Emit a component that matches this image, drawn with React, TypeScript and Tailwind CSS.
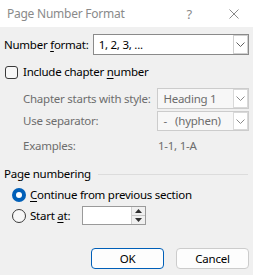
import React from 'react';

const Chevron: React.FC<{ color?: string }> = ({ color = '#606060' }) => (
  <svg width="9" height="5" viewBox="0 0 9 5" fill="none">
    <path d="M0.5 0.5 L4.5 4.5 L8.5 0.5" stroke={color} strokeWidth="1" />
  </svg>
);

interface ComboProps {
  value: string;
  disabled?: boolean;
  className?: string;
}

const Combo: React.FC<ComboProps> = ({ value, disabled, className }) => (
  <div
    className={`flex items-stretch border ${
      disabled ? 'border-[#cccccc] bg-[#f7f7f7] text-[#6d6d6d]' : 'border-[#8a8a8a] bg-white text-black'
    } ${className ?? ''}`}
  >
    <div className="flex-1 flex items-center pl-[5px] whitespace-pre">{value}</div>
    <div
      className={`w-[15px] flex items-center justify-center border ${
        disabled ? 'border-[#d9d9d9]' : 'border-[#d0d0d0]'
      } bg-white`}
    >
      <Chevron color={disabled ? '#8a8a8a' : '#606060'} />
    </div>
  </div>
);

const Radio: React.FC<{ checked?: boolean }> = ({ checked }) =>
  checked ? (
    <div className="w-[14px] h-[14px] rounded-full bg-[#005fb8] flex items-center justify-center">
      <div className="w-[6px] h-[6px] rounded-full bg-white" />
    </div>
  ) : (
    <div className="w-[14px] h-[14px] rounded-full border border-[#3a3a3a] bg-[#f7f7f7]" />
  );

export default function App() {
  return (
    <div
      className="w-[253px] h-[275px] bg-[#f0f0f0] text-[11.5px] tracking-[-0.25px] leading-[16px] text-black overflow-hidden whitespace-nowrap"
      style={{ fontFamily: '"Noto Sans", "Open Sans", sans-serif' }}
    >
      {/* title bar */}
      <div className="h-[27px] bg-white flex items-center text-[#8a8a8a]">
        <span className="pl-[7px] text-[12px]">Page Number Format</span>
        <span className="ml-auto mr-[37px] text-[13px]">?</span>
        <svg width="10" height="10" viewBox="0 0 10 10" className="mr-[14px]">
          <path d="M0.5 0.5 L9.5 9.5 M9.5 0.5 L0.5 9.5" stroke="#8a8a8a" strokeWidth="1" />
        </svg>
      </div>

      <div className="px-[4px] pt-[7px]">
        {/* number format */}
        <div className="flex items-center h-[21px]">
          <span className="w-[89px]">
            Number <u className="underline-offset-2">f</u>ormat:
          </span>
          <Combo value="1, 2, 3, ..." className="h-[21px] w-[157px]" />
        </div>

        {/* include chapter number */}
        <div className="flex items-center h-[14px] mt-[10px] pl-[1px]">
          <div className="w-[13px] h-[13px] rounded-[3px] border border-[#3a3a3a] bg-[#f7f7f7]" />
          <span className="ml-[5px]">
            Include chapter <u className="underline-offset-2">n</u>umber
          </span>
        </div>

        {/* disabled options */}
        <div className="pl-[19px] text-[#6d6d6d]">
          <div className="flex items-center h-[21px] mt-[9px]">
            <span className="w-[135px]">Chapter starts with style:</span>
            <Combo value="Heading 1" disabled className="h-[21px] w-[92px]" />
          </div>
          <div className="flex items-center h-[20px] mt-[2px]">
            <span className="w-[135px]">Use separator:</span>
            <Combo value="-   (hyphen)" disabled className="h-[20px] w-[92px]" />
          </div>
          <div className="flex items-center h-[16px] mt-[7px]">
            <span className="w-[135px]">Examples:</span>
            <span>1-1, 1-A</span>
          </div>
        </div>

        {/* page numbering group */}
        <div className="flex items-center h-[16px] mt-[12px]">
          <span>Page numbering</span>
          <div className="flex-1 h-px bg-[#dcdcdc] ml-[7px] mr-[1px]" />
        </div>

        <div className="pl-[8px]">
          <div className="flex items-center h-[16px] mt-[5px]">
            <Radio checked />
            <span className="ml-[4px]">
              <u className="underline-offset-2">C</u>ontinue from previous section
            </span>
          </div>
          <div className="flex items-center h-[19px] mt-[3px]">
            <Radio />
            <span className="ml-[4px] w-[52px]">
              Start <u className="underline-offset-2">a</u>t:
            </span>
            <div className="flex h-[19px] w-[64px] border border-[#9a9a9a] bg-white">
              <div className="flex-1" />
              <div className="w-[14px] flex flex-col border-l border-[#d0d0d0] bg-[#f0f0f0]">
                <div className="flex-1 flex items-center justify-center border-b border-[#c8c8c8]">
                  <svg width="7" height="4" viewBox="0 0 7 4">
                    <path d="M3.5 0 L7 4 L0 4 Z" fill="#303030" />
                  </svg>
                </div>
                <div className="flex-1 flex items-center justify-center">
                  <svg width="7" height="4" viewBox="0 0 7 4">
                    <path d="M0 0 L7 0 L3.5 4 Z" fill="#303030" />
                  </svg>
                </div>
              </div>
            </div>
          </div>
        </div>

        {/* buttons */}
        <div className="flex justify-end gap-[12px] mt-[23px]">
          <button className="w-[73px] h-[21px] rounded-[4px] border border-[#005fb8] bg-[#fdfdfd] text-black">
            OK
          </button>
          <button className="w-[73px] h-[21px] rounded-[4px] border border-[#cccccc] bg-[#fdfdfd] text-black">
            Cancel
          </button>
        </div>
      </div>
    </div>
  );
}
